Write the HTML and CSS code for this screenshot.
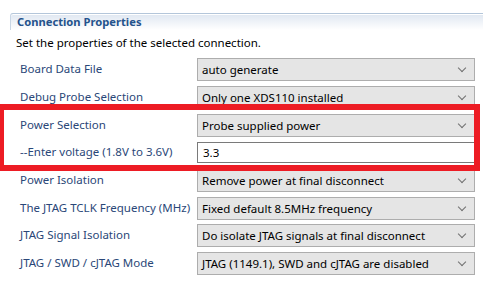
FILE: index.html
```html
<!DOCTYPE html>
<html lang="en">
<head>
    <meta charset="UTF-8">
    <meta name="viewport" content="width=device-width, initial-scale=1.0">
    <title>Connection Properties</title>
    <link rel="stylesheet" href="styles.css">
</head>
<body>

<div class="page">
    <div class="section-title">Connection Properties</div>
    <p class="section-desc">Set the properties of the selected connection.</p>

    <div class="props">
        <div class="row r28">
            <span class="label">Board Data File</span>
            <div class="combo">auto generate</div>
        </div>
        <div class="row r28">
            <span class="label">Debug Probe Selection</span>
            <div class="combo">Only one XDS110 installed</div>
        </div>
        <div class="row r27">
            <span class="label">Power Selection</span>
            <div class="combo">Probe supplied power</div>
        </div>
        <div class="row r28">
            <span class="label">--Enter voltage (1.8V to 3.6V)</span>
            <div class="text-field">3.3</div>
        </div>
        <div class="row r28">
            <span class="label">Power Isolation</span>
            <div class="combo">Remove power at final disconnect</div>
        </div>
        <div class="row r27">
            <span class="label">The JTAG TCLK Frequency (MHz)</span>
            <div class="combo">Fixed default 8.5MHz frequency</div>
        </div>
        <div class="row r28">
            <span class="label">JTAG Signal Isolation</span>
            <div class="combo">Do isolate JTAG signals at final disconnect</div>
        </div>
        <div class="row r28">
            <span class="label">JTAG / SWD / cJTAG Mode</span>
            <div class="combo">JTAG (1149.1), SWD and cJTAG are disabled</div>
        </div>
    </div>

    <!-- annotation drawn on top of the screenshot -->
    <div class="highlight-box"></div>
</div>

</body>
</html>
```

FILE: styles.css
```css
/* Basic reset */
* {
    margin: 0;
    padding: 0;
    box-sizing: border-box;
}

body {
    font-family: 'Noto Sans', 'Open Sans', sans-serif;
    font-size: 11.5px;
    background-color: #fff;
    color: #000;
}

.page {
    position: relative;
    width: 483px;
    height: 290px;
    overflow: hidden;
    padding-top: 13px;
}

/* Section header */
.section-title {
    margin-left: 10px;
    height: 17px;
    padding-left: 6px;
    font-size: 11.2px;
    font-weight: bold;
    color: #24528c;
    line-height: 16px;
    border-top: 1px solid #b4c6da;
    border-left: 1px solid #c9d6e5;
    border-top-left-radius: 3px;
    background: linear-gradient(#dfe7f1, #ffffff);
    box-shadow: inset 0 1px 0 #fff;
}

.section-desc {
    margin-left: 16px;
    margin-top: 4px;
    line-height: 18px;
    height: 24px;
}

/* Property rows */
.props {
    padding-left: 20px;
}

.row {
    display: grid;
    grid-template-columns: 177px 278px;
    align-items: start;
}

.r28 { height: 28px; }
.r27 { height: 27px; }

.label {
    color: #2a4778;
    line-height: 22px;
    white-space: nowrap;
}

.combo {
    position: relative;
    height: 23px;
    line-height: 21px;
    padding-left: 4px;
    background-color: #e5e5e5;
    border: 1px solid #adadad;
    white-space: nowrap;
}

.combo:after {
    content: '';
    position: absolute;
    right: 9px;
    top: 6px;
    width: 5px;
    height: 5px;
    border-right: 1px solid #707070;
    border-bottom: 1px solid #707070;
    transform: rotate(45deg);
}

.text-field {
    height: 21px;
    margin-top: 1px;
    line-height: 19px;
    padding-left: 5px;
    background-color: #fff;
    border: 1px solid #7a7a7a;
}

/* Red annotation rectangle */
.highlight-box {
    position: absolute;
    left: -2px;
    top: 104px;
    width: 482px;
    height: 67px;
    border: 6px solid #ed1c24;
}
```
